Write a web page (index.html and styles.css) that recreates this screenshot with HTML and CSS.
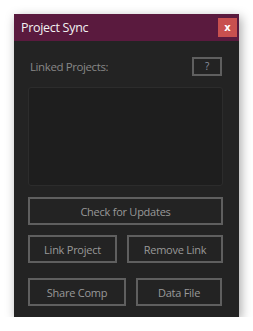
FILE: index.html
```html
<!DOCTYPE html>
<html lang="en">
<head>
  <meta charset="UTF-8">
  <title>Project Sync</title>
  <link rel="stylesheet" href="styles.css">
</head>
<body>
  <div class="panel">
    <div class="titlebar">
      <span class="title">Project Sync</span>
      <button class="close">x</button>
    </div>
    <div class="content">
      <div class="row label-row">
        <span class="label">Linked Projects:</span>
        <button class="btn help">?</button>
      </div>
      <div class="list"></div>
      <button class="btn wide">Check for Updates</button>
      <div class="row pair first">
        <button class="btn link">Link Project</button>
        <button class="btn remove">Remove Link</button>
      </div>
      <div class="row pair second">
        <button class="btn share">Share Comp</button>
        <button class="btn data">Data File</button>
      </div>
    </div>
  </div>
</body>
</html>
```

FILE: styles.css
```css
* {
  margin: 0;
  padding: 0;
  box-sizing: border-box;
}

body {
  background: #ffffff;
  font-family: "Open Sans", "Noto Sans", sans-serif;
  padding: 14px 0 0 14px;
}

/* Panel window */
.panel {
  width: 225px;
  height: 303px;
  background: #232323;
  box-shadow: 2px 3px 10px rgba(0, 0, 0, 0.35);
}

.titlebar {
  height: 27px;
  background: #5a1a3e;
  display: flex;
  align-items: center;
  justify-content: space-between;
  padding: 0 2px 0 7px;
}

.title {
  color: #f2f2f2;
  font-size: 12.5px;
  letter-spacing: -0.3px;
}

.close {
  width: 19px;
  height: 19px;
  border: none;
  background: #c8504f;
  color: #ffffff;
  font-family: "DejaVu Sans", sans-serif;
  font-size: 10px;
  font-weight: bold;
  line-height: 17px;
}

.content {
  padding: 16px 16px 0 14px;
  display: flex;
  flex-direction: column;
}

.row {
  display: flex;
  justify-content: space-between;
}

.label-row {
  align-items: center;
  padding-right: 1px;
}

.label {
  color: #878787;
  font-size: 11.5px;
  letter-spacing: -0.4px;
  padding-left: 2px;
}

/* Buttons */
.btn {
  height: 28px;
  background: #232323;
  border: 2px solid #5f5f5f;
  color: #999999;
  font-family: "Open Sans", "Noto Sans", sans-serif;
  font-size: 11px;
  letter-spacing: -0.25px;
}

.help {
  width: 30px;
  height: 19px;
  font-size: 10px;
  line-height: 13px;
  color: #8b92a0;
}

.list {
  height: 99px;
  margin-top: 11px;
  background: #1e1e1e;
  border: 1px solid #2c2c2c;
  border-radius: 3px;
}

.wide {
  margin-top: 11px;
  width: 195px;
}

.first {
  margin-top: 10px;
}

.second {
  margin-top: 15px;
}

.link { width: 89px; }
.remove { width: 96px; }
.share { width: 98px; }
.data { width: 86px; margin-right: 1px; }
```
